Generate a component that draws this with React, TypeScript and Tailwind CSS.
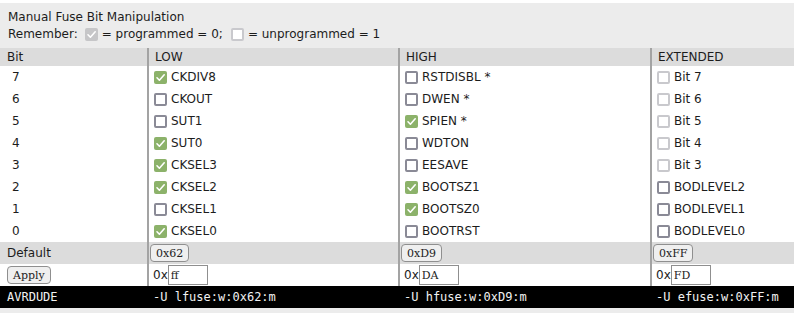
import React from "react";

type Bit = { label: string; checked: boolean; disabled?: boolean };

const low: Bit[] = [
  { label: "CKDIV8", checked: true },
  { label: "CKOUT", checked: false },
  { label: "SUT1", checked: false },
  { label: "SUT0", checked: true },
  { label: "CKSEL3", checked: true },
  { label: "CKSEL2", checked: true },
  { label: "CKSEL1", checked: false },
  { label: "CKSEL0", checked: true },
];

const high: Bit[] = [
  { label: "RSTDISBL *", checked: false },
  { label: "DWEN *", checked: false },
  { label: "SPIEN *", checked: true },
  { label: "WDTON", checked: false },
  { label: "EESAVE", checked: false },
  { label: "BOOTSZ1", checked: true },
  { label: "BOOTSZ0", checked: true },
  { label: "BOOTRST", checked: false },
];

const extended: Bit[] = [
  { label: "Bit 7", checked: false, disabled: true },
  { label: "Bit 6", checked: false, disabled: true },
  { label: "Bit 5", checked: false, disabled: true },
  { label: "Bit 4", checked: false, disabled: true },
  { label: "Bit 3", checked: false, disabled: true },
  { label: "BODLEVEL2", checked: false },
  { label: "BODLEVEL1", checked: false },
  { label: "BODLEVEL0", checked: false },
];

const Box: React.FC<{ checked: boolean; disabled?: boolean }> = ({ checked, disabled }) => {
  if (checked) {
    return (
      <span
        className={`inline-flex w-[13px] h-[13px] shrink-0 items-center justify-center rounded-[2px] ${
          disabled ? "bg-[#c6c6c8]" : "bg-[#8cb26a]"
        }`}
      >
        <svg viewBox="0 0 13 13" className="w-[13px] h-[13px]">
          <path d="M3 6.8 L5.4 9.2 L10.2 3.8" fill="none" stroke="white" strokeWidth="1.6" strokeLinecap="round" strokeLinejoin="round" />
        </svg>
      </span>
    );
  }
  return (
    <span
      className={`inline-block w-[13px] h-[13px] shrink-0 rounded-[2px] bg-white border-2 ${
        disabled ? "border-[#c9c9cd]" : "border-[#8a8a96]"
      }`}
    />
  );
};

const cellCols = "grid grid-cols-[147px_251px_252px_144px]";
const sep = "border-l-2 border-[#a3a3a3]";

const BitCell: React.FC<{ bit: Bit }> = ({ bit }) => (
  <div className={`${sep} flex items-center gap-[4px] pl-[5px] h-[22px]`}>
    <Box checked={bit.checked} disabled={bit.disabled} />
    <span>{bit.label}</span>
  </div>
);

const serifBtn =
  "h-[18px] px-[5px] rounded-[4px] border border-[#8f8f8f] bg-[#efefef] text-[11px] leading-none text-[#222] [font-family:'DejaVu_Serif',serif]";

const HexInput: React.FC<{ value: string }> = ({ value }) => (
  <div className="flex items-center">
    <span>0x</span>
    <input
      readOnly
      value={value}
      className="w-[40px] h-[20px] px-[2px] border border-[#8f8f8f] bg-white text-[11px] text-[#222] outline-none [font-family:'DejaVu_Serif',serif]"
    />
  </div>
);

export default function App() {
  return (
    <div className="w-[794px] h-[313px] bg-white pt-[3px] text-[12px] text-[#1c1c1c] [font-family:'DejaVu_Sans',sans-serif]">
      <div className="bg-[#ececec] h-[45px] px-[8px] pt-[6px] leading-[17px]">
        <div>Manual Fuse Bit Manipulation</div>
        <div className="flex items-center">
          <span>Remember:</span>
          <span className="ml-[7px] mr-[4px] flex">
            <Box checked disabled />
          </span>
          <span>= programmed = 0;</span>
          <span className="ml-[8px] mr-[4px] flex">
            <Box checked={false} disabled />
          </span>
          <span>= unprogrammed = 1</span>
        </div>
      </div>

      <div className={`${cellCols} bg-[#dcdcdc] h-[18px] leading-[18px]`}>
        <div className="pl-[7px]">Bit</div>
        <div className={`${sep} pl-[6px]`}>LOW</div>
        <div className={`${sep} pl-[6px]`}>HIGH</div>
        <div className={`${sep} pl-[6px]`}>EXTENDED</div>
      </div>

      {low.map((b, i) => (
        <div key={b.label} className={cellCols}>
          <div className="pl-[12px] flex items-center h-[22px]">{7 - i}</div>
          <BitCell bit={b} />
          <BitCell bit={high[i]} />
          <BitCell bit={extended[i]} />
        </div>
      ))}

      {/* defaults */}
      <div className={`${cellCols} bg-[#dcdcdc] h-[22px]`}>
        <div className="pl-[7px] flex items-center">Default</div>
        <div className={`${sep} pl-[1px] flex items-center`}>
          <button className={serifBtn}>0x62</button>
        </div>
        <div className={`${sep} pl-[1px] flex items-center`}>
          <button className={serifBtn}>0xD9</button>
        </div>
        <div className={`${sep} pl-[1px] flex items-center`}>
          <button className={serifBtn}>0xFF</button>
        </div>
      </div>

      <div className={`${cellCols} h-[22px]`}>
        <div className="pl-[7px] flex items-center">
          <button className={serifBtn}>Apply</button>
        </div>
        <div className={`${sep} pl-[4px] flex items-center`}>
          <HexInput value="ff" />
        </div>
        <div className={`${sep} pl-[4px] flex items-center`}>
          <HexInput value="DA" />
        </div>
        <div className={`${sep} pl-[4px] flex items-center`}>
          <HexInput value="FD" />
        </div>
      </div>

      <div className={`${cellCols} bg-black text-[#f2f2f2] h-[22px] leading-[22px] [font-family:'DejaVu_Sans_Mono',monospace]`}>
        <div className="pl-[7px]">AVRDUDE</div>
        <div className="pl-[6px]">-U lfuse:w:0x62:m</div>
        <div className="pl-[6px]">-U hfuse:w:0xD9:m</div>
        <div className="pl-[6px]">-U efuse:w:0xFF:m</div>
      </div>

      <div className="bg-[#ececec] h-[5px]" />
    </div>
  );
}
